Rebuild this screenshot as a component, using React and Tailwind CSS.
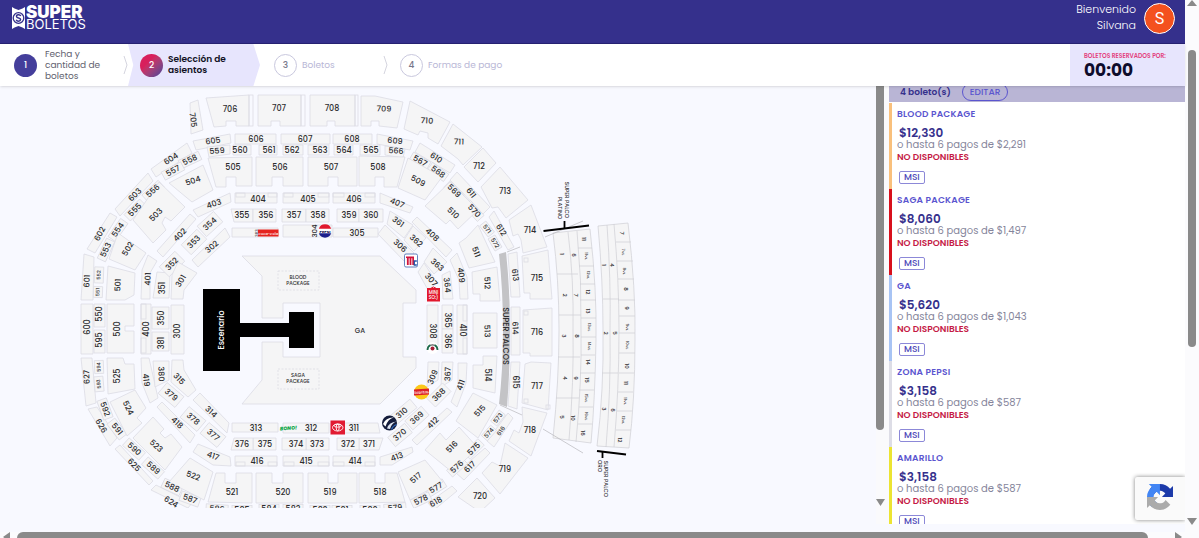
import React from "react";

const box = (x1, y1, x2, y2) => `${x1},${y1} ${x2},${y1} ${x2},${y2} ${x1},${y2}`;

// [label, x, y, rotation, outline points | [width, height] of a block centred on the label, font size]
const SECTIONS = [
  ["705", 193, 120, 83, "190,103 198,100 203,130 191,134"],
  ["706", 230, 109, 0, "206,98 249,95 249,126 236,126 236,121 226,121 226,126 214,127"],
  ["707", 279, 108, 0, "258,95 301,95 301,126 280,126 280,121 271,121 271,126 258,126"],
  ["708", 332, 108, 0, "310,95 355,95 355,126 335,126 335,121 327,121 327,126 310,126"],
  ["709", 384, 109, 2, "361,96 375,96 403,102 397,128 379,126 379,121 371,121 371,126 361,126"],
  ["710", 427, 121, 4, "410,101 450,122 438,144 428,138 428,133 420,131 418,135 404,129"],
  ["711", 459, 142, 2, "453,124 482,147 463,165 458,159 441,146"],
  ["712", 479, 166, 0, "483,148 496,163 478,182 464,167"],
  ["713", 505, 191, 0, "500,167 528,200 506,218 498,207 492,208 481,187"],
  ["714", 530, 230, 0, "531,205 547,247 523,253 521,240 518,234 513,236 509,220"],
  ["715", 537, 278, 0, "522,256 548,250 552,299 530,299 530,293 524,293"],
  ["716", 537, 332, 0, "523,310 552,308 552,356 530,356 530,353 523,353"],
  ["717", 537, 386, 0, "525,364 531,362 551,363 548,410 522,403"],
  ["718", 530, 430, 0, "522,407 547,413 531,456 509,441 514,430 519,433 523,422"],
  ["719", 505, 469, 0, "505,443 528,458 500,494 482,473 492,462 500,466"],
  ["720", 480, 496, 0, "477,478 495,498 480,512 458,497"],

  ["605", 213, 141, -7, "193,141 230,134 231,143 196,150"],
  ["606", 256, 139, 0, box(235, 134, 276, 144)],
  ["607", 305, 139, 0, box(281, 134, 330, 144)],
  ["608", 352, 139, 0, box(333, 134, 372, 144)],
  ["609", 395, 141, 6, "377,134 413,141 410,150 377,144"],
  ["610", 436, 158, 33, "420,143 455,165 450,173 415,152"],
  ["611", 471, 193, 52, "457,172 490,207 483,214 450,180"],
  ["612", 501, 230, 58, "494,211 514,247 508,250 489,217"],
  ["613", 515, 275, 83, "508,254 517,252 520,297 511,297"],
  ["614", 515, 328, 87, box(511, 307, 520, 355)],
  ["615", 515, 382, 90, "511,362 520,362 517,409 508,406"],
  ["616", 501, 431, -55, "508,413 513,418 494,447 487,441", 6],
  ["617", 470, 467, -45, "485,448 490,453 464,480 456,473"],
  ["618", 436, 502, -30, "452,486 457,491 434,510 428,503"],
  ["604", 171, 159, -33, "187,143 192,153 156,177 151,169"],
  ["603", 135, 195, -45, "148,173 153,181 120,216 115,209"],
  ["602", 100, 234, -62, "110,213 117,217 95,253 87,249"],
  ["601", 87, 281, -87, "84,254 94,257 93,300 81,300"],
  ["600", 87, 327, -90, box(81, 304, 93, 354)],
  ["627", 87, 377, -93, "81,358 92,358 96,403 86,406"],
  ["626", 101, 426, 60, "88,409 97,407 117,438 110,446"],
  ["625", 134, 465, 45, "120,445 153,481 149,485 115,449"],
  ["624", 171, 502, 32, "156,485 192,503 188,508 151,490"],

  ["559", 217, 151, -3, "207,147 230,145 230,154 209,157"],
  ["560", 240, 150, 0, box(233, 145, 251, 155)],
  ["561", 269, 150, 0, box(259, 145, 277, 155)],
  ["562", 292, 150, 0, box(283, 145, 303, 155)],
  ["563", 320, 150, 0, box(308, 145, 329, 155)],
  ["564", 344, 150, 0, box(334, 145, 353, 155)],
  ["565", 371, 150, 0, box(360, 145, 380, 155)],
  ["566", 396, 151, 4, "385,146 405,149 403,158 385,155"],
  ["567", 420, 161, 30, [20, 9]],
  ["568", 438, 172, 36, [20, 9]],
  ["569", 454, 191, 45, [20, 9]],
  ["570", 474, 211, 48, [20, 9]],
  ["571", 487, 229, 52, [14, 8], 6],
  ["572", 495, 243, 60, [14, 8], 6],
  ["573", 498, 418, -52, [14, 8], 6],
  ["574", 489, 433, -48, [14, 8], 6],
  ["575", 474, 449, -45, [20, 9]],
  ["576", 457, 467, -42, [20, 9]],
  ["577", 436, 488, -32, [20, 9]],
  ["578", 421, 500, -25, [20, 9]],
  ["579", 395, 508, -5, [22, 9]],
  ["558", 190, 160, -25, [22, 9]],
  ["557", 173, 171, -28, [22, 9]],
  ["556", 153, 191, -42, [22, 9]],
  ["555", 135, 210, -45, [22, 9]],
  ["554", 118, 230, -55, [22, 9]],
  ["553", 106, 250, -65, [22, 9]],
  ["552", 99, 275, -88, [16, 9], 5],
  ["551", 98, 292, -88, [11, 9], 5],
  ["550", 99, 314, -90, box(94, 304, 105, 327)],
  ["595", 99, 340, -90, box(94, 330, 105, 353)],
  ["594", 99, 367, -92, [13, 9], 5],
  ["593", 99, 384, -95, [15, 9], 5],
  ["592", 105, 409, 70, [20, 10]],
  ["591", 117, 429, 52, [20, 10]],
  ["590", 134, 449, 42, [22, 10]],
  ["589", 153, 468, 42, [22, 10]],
  ["588", 172, 487, 25, [20, 10]],
  ["587", 190, 499, 20, [20, 10]],
  ["586", 217, 509, 4, [22, 9]],
  ["585", 242, 510, 0, [20, 9]],
  ["584", 269, 509, 0, [20, 9]],
  ["583", 293, 509, 0, [20, 9]],
  ["582", 320, 510, 0, [20, 9]],
  ["581", 342, 510, 0, [20, 9]],
  ["580", 370, 510, 0, [20, 9]],

  ["505", 233, 167, 0, "208,158 252,157 252,186 236,186 236,177 226,177 226,187 216,187"],
  ["506", 280, 167, 0, "256,157 303,157 303,186 283,186 283,177 272,177 272,186 256,186"],
  ["507", 331, 167, 0, "308,157 357,157 357,186 338,186 338,177 328,177 328,186 308,186"],
  ["508", 378, 167, 0, "359,156 405,157 397,187 384,187 384,177 375,177 375,186 359,186"],
  ["509", 418, 181, 28, "408,158 442,177 425,200 398,188"],
  ["510", 453, 213, 45, "450,182 478,210 458,229 450,220 446,224 425,206"],
  ["511", 476, 252, 70, "478,225 495,262 469,268 459,243 466,238"],
  ["512", 487, 283, 87, "472,272 497,267 500,301 480,301 480,294 473,294"],
  ["513", 487, 331, 88, box(473, 313, 497, 348)],
  ["514", 487, 375, 90, "483,356 497,356 495,393 473,388 473,365 483,365"],
  ["515", 480, 411, -47, "473,393 497,405 478,438 456,421"],
  ["516", 452, 447, -45, "440,433 446,440 459,427 478,448 452,472 425,450"],
  ["517", 416, 478, -42, "425,460 443,482 410,500 398,472"],
  ["518", 380, 492, 0, "359,473 375,473 375,483 385,483 385,473 397,473 405,502 359,503"],
  ["519", 330, 492, 0, "308,473 328,473 328,483 338,483 338,473 357,473 357,503 308,503"],
  ["520", 283, 492, 0, "256,473 272,473 272,483 283,483 283,473 303,473 303,503 256,503"],
  ["521", 232, 492, 0, "216,473 225,473 225,483 236,483 236,473 252,473 252,503 208,502"],
  ["522", 193, 476, 22, "190,458 213,472 204,500 169,482"],
  ["523", 156, 446, 42, "153,417 164,429 160,433 165,438 171,434 182,447 165,470 133,438"],
  ["524", 128, 408, 65, "135,390 146,408 137,418 142,423 127,436 110,402"],
  ["525", 117, 376, -90, "107,358 123,358 125,364 134,364 135,389 108,394"],
  ["500", 117, 329, -90, "107,304 134,304 134,326 125,326 125,331 134,331 134,353 107,353"],
  ["501", 118, 285, -88, "108,266 135,273 134,295 125,300 106,300"],
  ["502", 128, 249, -58, "118,233 146,253 135,270 109,259"],
  ["503", 156, 215, -45, "159,182 185,207 171,221 165,217 162,223 166,230 153,243 133,220"],
  ["504", 193, 181, -18, "203,165 213,190 192,202 169,183"],

  ["403", 214, 204, -18, "230,193 231,202 198,217 193,210"],
  ["404", 258, 199, 0, box(235, 193, 277, 203)],
  ["405", 308, 199, 0, box(283, 193, 329, 203)],
  ["406", 354, 199, 0, box(333, 193, 375, 203)],
  ["407", 397, 203, 23, "380,193 413,207 410,213 380,203"],
  ["408", 432, 235, 43, "417,217 452,250 446,257 412,222"],
  ["409", 461, 275, 83, "457,253 467,277 468,299 460,299 459,280 450,260"],
  ["410", 462, 330, 90, box(457, 305, 467, 354)],
  ["411", 461, 385, -70, "458,363 467,363 466,383 457,407 451,402 458,385"],
  ["412", 433, 423, -45, "447,408 452,412 417,445 412,440"],
  ["413", 397, 457, -20, "412,447 413,452 392,465 380,465 380,457"],
  ["414", 355, 461, 0, box(333, 456, 375, 466)],
  ["415", 306, 461, 0, box(283, 456, 329, 466)],
  ["416", 257, 461, 0, box(235, 456, 277, 466)],
  ["417", 213, 456, 20, "198,444 230,457 231,466 213,465 193,452"],
  ["418", 177, 423, 43, "162,402 195,435 190,443 157,407"],
  ["419", 146, 380, 83, "141,358 149,358 158,398 150,403 142,383"],
  ["400", 146, 329, -90, box(141, 304, 151, 354)],
  ["401", 148, 279, -88, "148,255 157,261 150,273 150,299 141,299 142,270"],
  ["402", 180, 235, -45, "190,214 196,219 163,257 157,251"],

  ["355", 242, 215, 0, "231,209 253,209 253,222 234,222"],
  ["356", 266, 215, 0, box(253, 209, 276, 222)],
  ["357", 294, 215, 0, box(282, 209, 306, 222)],
  ["358", 318, 215, 0, box(306, 209, 329, 222)],
  ["359", 349, 215, 0, box(337, 209, 359, 222)],
  ["360", 371, 215, 0, box(359, 209, 383, 222)],
  ["361", 398, 222, 37, "390,211 413,225 404,238 387,224"],
  ["362", 416, 241, 42, "413,226 426,238 414,251 404,240"],
  ["363", 437, 265, 42, "433,248 447,262 434,274 424,262"],
  ["364", 447, 285, 83, "442,275 450,271 453,299 443,299"],
  ["365", 447, 320, 90, box(442, 305, 453, 329)],
  ["366", 447, 341, 90, box(442, 329, 453, 353)],
  ["367", 448, 374, -88, "442,362 453,362 452,380 441,387"],
  ["368", 439, 395, -45, [22, 12]],
  ["369", 417, 418, -42, [22, 12]],
  ["370", 400, 435, -40, [22, 12]],
  ["371", 369, 444, 0, "359,438 383,438 379,450 359,450"],
  ["372", 348, 444, 0, box(337, 438, 359, 450)],
  ["373", 317, 444, 0, box(306, 438, 329, 450)],
  ["374", 296, 444, 0, box(282, 438, 306, 450)],
  ["375", 265, 444, 0, box(253, 438, 276, 450)],
  ["376", 242, 444, 0, "234,438 253,438 253,450 231,450"],
  ["377", 213, 435, 40, [22, 14]],
  ["378", 193, 419, 40, [22, 14]],
  ["379", 171, 395, 40, [22, 14]],
  ["380", 161, 374, 88, "153,361 169,361 169,380 155,387"],
  ["381", 161, 343, -90, box(152, 332, 169, 351)],
  ["350", 161, 318, -90, box(152, 307, 169, 329)],
  ["351", 162, 288, -90, "157,272 170,273 169,298 153,298"],
  ["352", 172, 264, -45, [22, 14]],
  ["353", 194, 242, -45, [22, 14]],
  ["354", 210, 224, -42, [22, 14]],

  ["300", 177, 331, -90, box(171, 305, 184, 354)],
  ["301", 181, 281, -58, "178,262 197,273 184,290 183,299 171,299 172,275"],
  ["302", 212, 247, -40, "225,228 230,237 198,267 192,260"],
  ["303", 256, 233, -90, box(232, 228, 278, 237), 4],
  ["304", 314, 231, -90, box(283, 225, 332, 237), 7],
  ["305", 357, 233, 0, box(333, 228, 378, 237)],
  ["306", 400, 246, 42, "385,225 378,234 405,262 414,253"],
  ["307", 431, 280, 48, "424,263 437,283 428,290 418,272"],
  ["308", 432, 331, 90, box(427, 305, 438, 347)],
  ["309", 433, 377, -68, "428,362 439,362 438,380 427,387"],
  ["310", 402, 413, -40, [30, 11]],
  ["311", 354, 428, 0, "331,423 378,423 380,433 331,433"],
  ["312", 311, 428, 0, box(283, 423, 329, 433)],
  ["313", 256, 428, 0, box(232, 423, 278, 432)],
  ["314", 211, 412, 42, "200,393 229,423 227,433 193,400"],
  ["315", 179, 379, 47, "172,360 183,360 184,370 196,390 188,397 171,382"],
];

const AISLE_BOXES = [
  [236, 193, 9, 4], [268, 193, 9, 4], [284, 193, 9, 4], [318, 193, 11, 4], [333, 193, 11, 4], [365, 193, 10, 4],
  [236, 462, 9, 4], [268, 462, 9, 4], [284, 462, 10, 4], [318, 462, 11, 4], [333, 462, 11, 4], [365, 462, 10, 4],
  [141, 338, 5, 15], [141, 304, 5, 15], [463, 305, 4, 16], [463, 338, 4, 16],
  [249, 95, 4, 31], [301, 95, 4, 31], [355, 95, 3, 31], [524, 258, 4, 4], [524, 311, 4, 4], [524, 399, 4, 4], [546, 405, 4, 4],
];

// Small boxes east of the bowl: [label, x, y]
const PALCOS = [
  ["1", 562, 254], ["2", 565, 295], ["3", 564, 336], ["4", 565, 378], ["5", 562, 417],
  ["6", 574, 255], ["7", 576, 295], ["8", 577, 336], ["9", 576, 378], ["10", 573, 418],
  ["11", 584, 239], ["11VL", 586, 256], ["12VL", 588, 275], ["12", 588, 292], ["13", 588, 311], ["13VL", 589, 327],
  ["14VL", 589, 346], ["14", 588, 362], ["15", 587, 380], ["15VL", 586, 398], ["16VL", 586, 416], ["16", 583, 433],
  ["1", 604, 265], ["4", 612, 265], ["2", 606, 333], ["5", 615, 333], ["3", 604, 409], ["6", 613, 410],
  ["7", 622, 233], ["7VL", 623, 252], ["8VL", 624, 271], ["8", 626, 289], ["9", 627, 308], ["9VL", 627, 327],
  ["10VL", 627, 345], ["10", 627, 366], ["11", 626, 383], ["11VL", 625, 401], ["12VL", 623, 420], ["12", 620, 440],
];

function SectionShape({ data }) {
  const [, x, y, r, shape] = data;
  return Array.isArray(shape) ? (
    <rect x={x - shape[0] / 2} y={y - shape[1] / 2} width={shape[0]} height={shape[1]} transform={`rotate(${r} ${x} ${y})`} />
  ) : (
    <polygon points={shape} />
  );
}

function Label({ x, y, r = 0, size = 8, fill = "#2e2e30", children }) {
  return (
    <text
      x={x} y={y} fontSize={size} fill={fill} stroke="none" textAnchor="middle" dominantBaseline="central"
      transform={r ? `rotate(${r} ${x} ${y})` : undefined}
    >
      {children}
    </text>
  );
}

function Sponsors() {
  return (
    <g stroke="none">
      <rect x="258" y="229.5" width="20.5" height="7" fill="#e5231f" />
      <Label x={268.2} y={233} size={3.5} fill="#fff">Coca-Cola</Label>
      <circle cx="325" cy="231" r="6.5" fill="#fff" />
      <path d="M318.8 228.7a6.6 6.6 0 0 1 12.4 0z" fill="#e0182d" />
      <path d="M318.8 233.300a6.600 6.600 0 0 0 12.400 0z" fill="#1c1f8c" />
      <text x="325" y="231" fontSize="4" fontWeight="800" fill="#12124a" textAnchor="middle" dominantBaseline="central">PEPSI</text>
      <rect x="404.5" y="254" width="13" height="13" rx="1.500" fill="#fff" stroke="#3d63ad" strokeWidth=".8" />
      <path d="M406 256.500h8v8.500h-1.700v-6.800h-.9v6.800h-1.800v-6.800h-.9v6.800h-1.800v-7h-.9z" fill="#d2143a" />
      <path d="M416.800 261h-2.500v4h2.500" fill="none" stroke="#2356a8" strokeWidth="1.300" />
      <path d="M430.500 288.500q3-3 6 0" fill="none" stroke="#e2182d" />
      <rect x="427" y="288" width="13" height="13.500" fill="#e2182d" />
      <Label x={433.5} y={292.5} size={4.5} fill="#fff">MINI</Label>
      <Label x={433.5} y={297.5} size={4.5} fill="#fff">SO:)</Label>
      <circle cx="432.500" cy="348" r="6" fill="#fff" />
      <path d="M427.500 350a5.500 5.500 0 0 1 3-5" fill="none" stroke="#1d6a4b" strokeWidth="1.800" />
      <path d="M430.500 345.200a5.500 5.500 0 0 1 4 0" fill="none" stroke="#555" strokeWidth="1.200" />
      <path d="M434.500 345a5.500 5.500 0 0 1 3 5" fill="none" stroke="#1d6a4b" strokeWidth="1.800" />
      <circle cx="432.500" cy="348.500" r="2" fill="#a51d36" />
      <circle cx="421.500" cy="392" r="7.500" fill="#fbc81b" />
      <path d="M414 389.500l15-1v6l-15 1z" fill="#dd1f26" />
      <Label x={421.5} y={392} size={3.5} r={-3} fill="#fff">Sabritas</Label>
      <circle cx="389.500" cy="423" r="7.500" fill="#151d3c" />
      <path d="M383 424q3-7 11-6.500q-6 1-8.500 9z" fill="#fff" />
      <path d="M387 428.500q2-6.500 9.500-7q-5 1.500-6.500 7.500z" fill="#dfe6f2" />
      <path d="M391.500 429.500q1-3.500 5-5" fill="none" stroke="#2e66b8" strokeWidth="1.200" />
      <rect x="330.500" y="420.500" width="14.500" height="14" fill="#e11b32" />
      <g fill="none" stroke="#fff" strokeWidth=".9">
        <ellipse cx="337.700" cy="427.500" rx="5.200" ry="3.500" />
        <ellipse cx="337.700" cy="427.500" rx="1.500" ry="3.300" />
        <ellipse cx="337.700" cy="425.700" rx="3.600" ry="1.500" />
      </g>
      <text x="288.500" y="428.500" fontSize="5" fontStyle="italic" fontWeight="800" fill="#0fa84a" textAnchor="middle" dominantBaseline="central" transform="rotate(-4 288 428)">BONO!</text>
    </g>
  );
}

function SeatMap() {
  return (
    <svg viewBox="0 86 876 422" className="block w-full overflow-hidden font-[Poppins,Inter,sans-serif] font-medium" role="img" aria-label="Mapa de asientos">
      <g fill="#f5f5f6" stroke="#dcdce4" strokeWidth=".8">
        {SECTIONS.map((s) => <SectionShape key={s[0]} data={s} />)}
        <g fill="none">
          {AISLE_BOXES.map(([x, y, w, h]) => <rect key={`${x}-${y}`} x={x} y={y} width={w} height={h} />)}
        </g>
        <polygon points="242,256 380,256 416,290 416,303 403,303 403,357 416,357 416,368 380,404 242,404 262,380 262,342 283,342 283,357 320,357 320,303 283,303 283,318 262,318 262,276" />
        <g strokeDasharray="2 1.500">
          <rect x="278" y="271" width="41" height="19" />
          <rect x="278" y="369" width="41" height="20" />
        </g>
        <g stroke="#cfcfd4" strokeWidth=".7">
          <path d="M553 233L590 229Q597 290 596 340Q595 400 591 443L553 438Q559 380 559 330Q559 280 553 233Z" />
          <path d="M568 232Q574 280 573 330Q574 380 569 440M577 231Q582 280 581 330Q582 380 576 442" fill="none" />
          <path d="M557 274H578M559 315H581M558 357H580M556 398H579M578 248H592M579 266H594M580 284H595M580 300H596M581 318H596M581 337H596M581 355H595M580 373H595M579 390H594M579 407H593M578 424H592" fill="none" />
          <path d="M598 226L628 223Q636 290 635 340Q635 400 629 448L597 446Q604 390 603 330Q603 280 598 226Z" />
          <path d="M607 225Q611 280 610 330Q611 390 606 447M614 224Q619 280 619 330Q619 390 614 447" fill="none" />
          <path d="M603 299H619M602 373H618M616 242H631M617 261H633M618 279H634M618 300H635M619 316H635M619 333H635M619 353H635M619 373H634M618 392H633M617 411H632M616 430H631" fill="none" />
          <path d="M545 237L583 221M543 429L583 453M507 252L520 247M500 405L522 415" stroke="#b8b8bc" fill="none" />
        </g>
      </g>
      {SECTIONS.map(([t, x, y, r, , size]) => <Label key={t} x={x} y={y} r={r} size={size}>{t}</Label>)}
      {PALCOS.map(([t, x, y]) => <Label key={`${x}-${y}`} x={x} y={y} r={90} size={t.length > 2 ? 4 : 5.5}>{t}</Label>)}
      <path d="M499 254L506 252Q510 290 510 330Q510 370 507 407L499 404Q503 370 503 330Q503 290 499 254Z" fill="#c3c3c6" />
      <Label x={505} y={336} r={90} size={8}>SUPER  PALCOS</Label>
      <g stroke="#000" fill="none">
        <path d="M543.500 231L589 225.500M597 451L626 454.500" strokeWidth="2.200" />
        <path d="M564.500 221V228M602.500 452V458" strokeWidth="1.800" />
      </g>
      <Label x={567} y={200} r={90} size={5.5}>SUPER  PALCO</Label>
      <Label x={560} y={208} r={90} size={5.5}>PLATINO</Label>
      <Label x={605.5} y={479} r={90} size={5.5}>SUPER  PALCO</Label>
      <Label x={599.5} y={466} r={90} size={5.5}>ORO</Label>
      <path d="M203 289H240V323H289V312H314V348H289V337H240V371H203Z" fill="#000" />
      <Label x={221} y={330} r={-90} size={8} fill="#fff">Escenario</Label>
      <Label x={360} y={330} size={7}>GA</Label>
      <Label x={298} y={277.5} size={5}>BLOOD</Label>
      <Label x={298} y={283.5} size={5}>PACKAGE</Label>
      <Label x={298} y={375.5} size={5}>SAGA</Label>
      <Label x={298} y={381.5} size={5}>PACKAGE</Label>
      <Sponsors />
    </svg>
  );
}

const TICKETS = [
  { name: "BLOOD PACKAGE", price: "$12,330", pay: "$2,291", bar: "border-[#f9c07c]" },
  { name: "SAGA PACKAGE", price: "$8,060", pay: "$1,497", bar: "border-[#d8101c]" },
  { name: "GA", price: "$5,620", pay: "$1,043", bar: "border-[#a8c4f4]" },
  { name: "ZONA PEPSI", price: "$3,158", pay: "$587", bar: "border-[#dddde6]" },
  { name: "AMARILLO", price: "$3,158", pay: "$587", bar: "border-[#ece432]" },
];

function Ticket({ name, price, pay, bar }) {
  return (
    <li className={`h-[86px] shrink-0 border-l-3 pl-[5px] pt-[3px] ${bar}`}>
      <h3 className="text-[9px] leading-4 font-semibold tracking-wide text-[#5b55cf]">{name}</h3>
      <p className="mt-[5px] pl-0.5 text-xs leading-3 font-semibold text-[#35308c]">{price}</p>
      <p className="text-[10px] leading-3 text-[#85859b]">o hasta 6 pagos de {pay}</p>
      <p className="text-[9px] leading-3 font-semibold text-[#c51a45]">NO DISPONIBLES</p>
      <span className="mt-[5px] ml-0.5 inline-block rounded-xs border border-[#8c88d8] px-1 text-[9px] leading-[11px] font-medium text-[#4d47b8]">MSI</span>
    </li>
  );
}

function StepNumber({ children, className }) {
  return <span className={`flex size-[23px] shrink-0 items-center justify-center rounded-full text-[9px] font-medium ${className}`}>{children}</span>;
}

function Chevron() {
  return (
    <svg width="5" height="20" viewBox="0 0 5 20" className="ml-auto shrink-0" fill="none" stroke="#d5d5df" aria-hidden="true">
      <path d="M1 1L4 10L1 19" />
    </svg>
  );
}

function Steps() {
  return (
    <nav className="relative z-10 flex h-[42px] shrink-0 bg-white shadow-sm" aria-label="Proceso de compra">
      <ol className="flex flex-1 text-[9px] leading-[11px]">
        <li className="flex w-32 items-center gap-2 pl-3.5 text-[#62626f]">
          <StepNumber className="bg-[#443e9b] text-white">1</StepNumber>
          <span className="w-16">Fecha y cantidad de boletos</span>
          <Chevron />
        </li>
        <li aria-current="step" className="flex w-33 items-center gap-[5px] bg-[#e7e5fd] pl-3 font-semibold text-[#111124] [clip-path:polygon(0_0,95%_0,100%_50%,95%_100%,0_100%,4%_50%)]">
          <StepNumber className="bg-linear-to-br from-[#d81f5c] from-35% to-[#443e9b] text-white">2</StepNumber>
          <span className="w-16">Selección de asientos</span>
        </li>
        <li className="flex w-32 items-center gap-[5px] pl-3.5 text-[#b9b7d6]">
          <StepNumber className="border border-[#c9c8de] text-[#77778a]">3</StepNumber>
          <span>Boletos</span>
          <Chevron />
        </li>
        <li className="flex items-center gap-[5px] pl-3 text-[#b9b7d6]">
          <StepNumber className="border border-[#c9c8de] text-[#77778a]">4</StepNumber>
          <span className="whitespace-nowrap">Formas de pago</span>
        </li>
      </ol>
      <div className="w-[115px] bg-[#e7e5fd] pt-2 pl-3.5 whitespace-nowrap">
        <p className="text-[6px] leading-[9px] font-semibold text-[#e3417d]">BOLETOS RESERVADOS POR:</p>
        <p className="text-[17px] leading-[18px] font-bold text-[#0e0c2c]">00:00</p>
      </div>
    </nav>
  );
}

function Header() {
  return (
    <header className="flex h-11 shrink-0 items-start justify-between border-b border-[#272273] bg-[#35308c] pl-3 text-white">
      <a href="#inicio" aria-label="Super Boletos" className="flex gap-px pt-[7px]">
        <svg width="13" height="22" viewBox="0 0 13 22" aria-hidden="true">
          <path d="M0 0L2.500 1.500L6.500 3L10.500 1.500L13 0V22L10.500 20.500L6.500 19L2.500 20.500L0 22Z" fill="#fff" />
          <circle cx="6.500" cy="11" r="5.300" fill="#fff" stroke="#35308c" strokeWidth="1.300" />
          <path d="M8.800 9Q8 7.500 6.300 7.700Q4.300 8 4.500 9.500Q4.700 10.700 6.600 11Q8.700 11.400 8.600 12.700Q8.400 14.200 6.500 14.200Q4.800 14.200 4.200 12.800" fill="none" stroke="#35308c" strokeWidth="1.500" />
        </svg>
        <span className="flex flex-col font-[Inter,sans-serif]">
          <span className="text-[17px] leading-[11px] font-black">SUPER</span>
          <span className="text-[13px] leading-[13px] font-normal">BOLETOS</span>
        </span>
      </a>
      <div className="flex items-start gap-2 pt-px pr-2.5">
        <p className="text-right text-[11px] leading-4 font-light">Bienvenido<br />Silvana</p>
        <span className="mt-0.5 flex size-[31px] items-center justify-center rounded-full border border-white bg-[#f4511e] font-[Roboto,sans-serif] text-base">S</span>
      </div>
    </header>
  );
}

function Arrow({ d, className = "" }) {
  return (
    <svg width="10" height="10" viewBox="0 0 10 10" className={`shrink-0 ${className}`} fill="#8a8a8a" aria-hidden="true">
      <path d={d} />
    </svg>
  );
}

function Recaptcha() {
  return (
    <div className="absolute right-0 bottom-[18px] z-20 flex h-[43px] w-[50px] items-center justify-center rounded-l-xs bg-[#fafafa] shadow-[0_0_4px_#808080] [clip-path:inset(-5px_0_-5px_-5px)]">
      <svg width="26" height="26" viewBox="0 0 64 64" className="mb-1" role="img" aria-label="reCAPTCHA">
        <path d="M64 31.955l-.033-1.370V4.687l-7.160 7.160C50.948 4.674 42.033.093 32.050.093c-10.400 0-19.622 4.960-25.458 12.640l11.736 11.860a15.550 15.550 0 0 1 4.754-5.334c2.050-1.600 4.952-2.906 8.968-2.906.485 0 .860.057 1.135.163 4.976.393 9.288 3.140 11.828 7.124l-8.307 8.307L64 31.953" fill="#1c3aa9" />
        <path d="M31.862.094l-1.370.033H4.594l7.160 7.160C4.580 13.147 0 22.060 0 32.046c0 10.400 4.960 19.622 12.640 25.458L24.500 45.768a15.550 15.550 0 0 1-5.334-4.754c-1.600-2.050-2.906-4.952-2.906-8.968 0-.485.057-.860.163-1.135.393-4.976 3.140-9.288 7.124-11.828l8.307 8.307L31.860.095" fill="#4285f4" />
        <path d="M.001 32.045l.033 1.370v25.898l7.160-7.160c5.860 7.173 14.774 11.754 24.760 11.754 10.400 0 19.622-4.960 25.458-12.640l-11.736-11.860a15.550 15.550 0 0 1-4.754 5.334c-2.050 1.600-4.952 2.906-8.968 2.906-.485 0-.860-.057-1.135-.163-4.976-.393-9.288-3.140-11.828-7.124l8.307-8.307c-10.522.040-22.400.066-29.295-.008" fill="#ababab" />
      </svg>
    </div>
  );
}

export default function App() {
  return (
    <div className="flex h-screen overflow-hidden bg-[#fbfbfd] font-[Poppins,Inter,sans-serif]">
      <div className="relative flex min-w-0 flex-1 flex-col">
        <Header />
        <Steps />
        <div className="flex min-h-0 flex-1 bg-[#f8f9ff] pb-2">
          <main className="min-w-0 flex-1 overflow-hidden">
            <SeatMap />
          </main>
          <div className="flex w-[13px] shrink-0 flex-col items-start bg-[#fafafc] pb-4">
            <div className="w-2 flex-[343] rounded-b-full bg-[#8a8a8a]" />
            <div className="flex-[68]" />
            <Arrow d="M0 1H9L4.500 8Z" />
          </div>
          <aside className="flex w-[296px] shrink-0 flex-col overflow-hidden bg-white">
            <div className="flex h-4 shrink-0 items-end gap-[11px] overflow-hidden bg-[#b9b5d5] pl-[11px] text-[#35308c]">
              <p className="mb-1 text-[9px] leading-3 font-semibold">4 boleto(s)</p>
              <button type="button" className="mb-px h-[18px] shrink-0 rounded-full border border-[#5b55cf] px-[7px] text-[9px] leading-4 font-medium text-[#5b55cf]">EDITAR</button>
            </div>
            <ul className="flex flex-col pt-px">
              {TICKETS.map((t) => <Ticket key={t.name} {...t} />)}
            </ul>
          </aside>
        </div>
        <div className="flex h-1.5 shrink-0 items-start overflow-hidden bg-[#fbfbfd]">
          <Arrow d="M10 0V10L3 5Z" />
          <div className="ml-[7px] h-3 flex-1 rounded-full bg-[#8a8a8a]" />
          <Arrow d="M0 0V10L7 5Z" className="ml-[27px]" />
        </div>
        <Recaptcha />
      </div>
      <div className="flex w-3.5 shrink-0 flex-col items-center pb-3">
        <Arrow d="M0 6H10L5 0Z" />
        <div className="flex-[40]" />
        <div className="w-2 flex-[298] rounded-full bg-[#8a8a8a]" />
        <div className="flex-[170]" />
        <Arrow d="M0 2H10L5 9Z" />
      </div>
    </div>
  );
}
